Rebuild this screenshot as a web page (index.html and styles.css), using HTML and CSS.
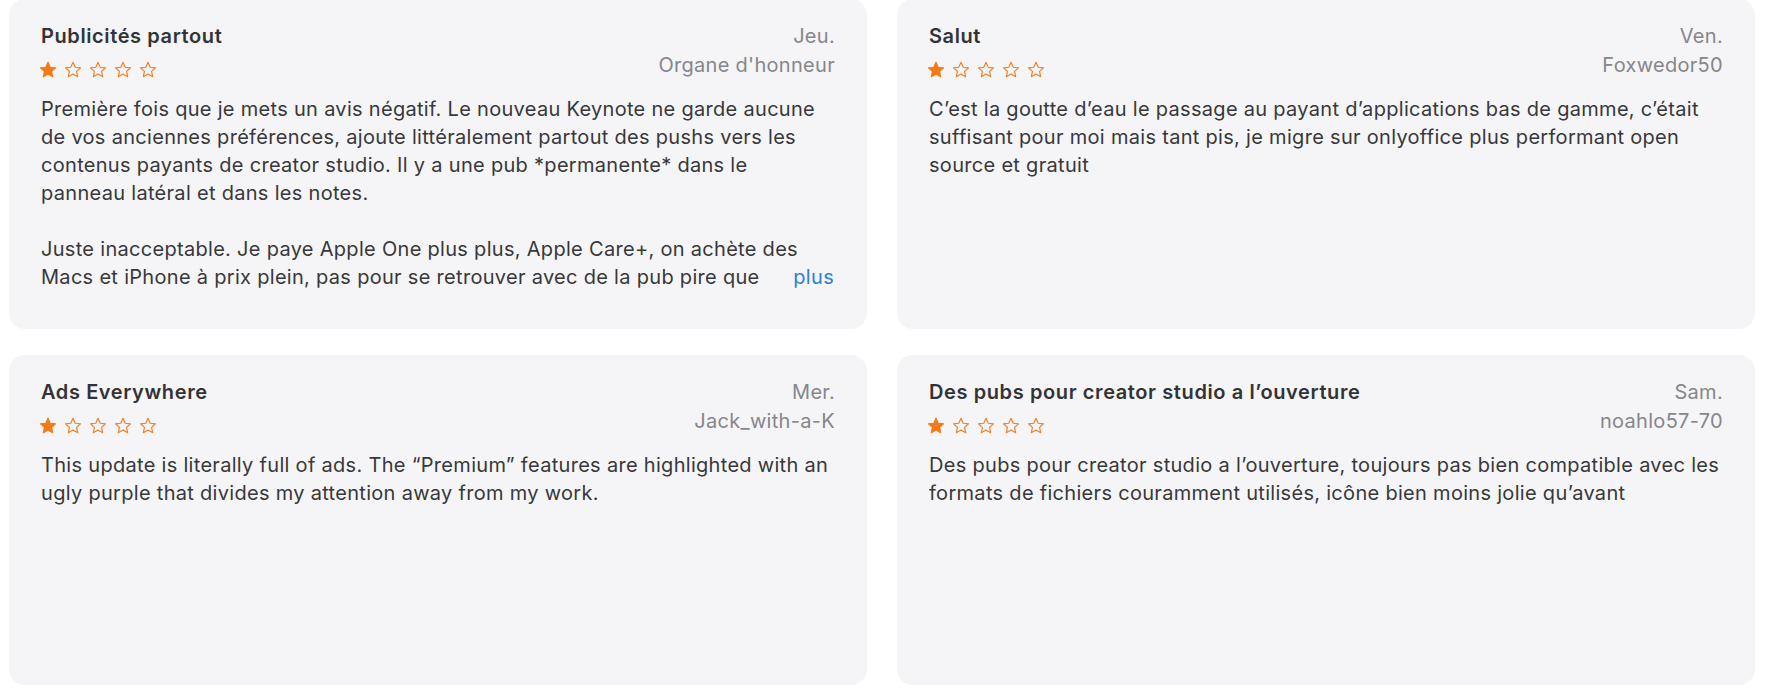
FILE: index.html
```html
<!DOCTYPE html>
<html lang="fr">
<head>
<meta charset="utf-8">
<title>Avis</title>
<link rel="stylesheet" href="styles.css">
</head>
<body>
<svg width="0" height="0" class="defs" aria-hidden="true">
  <defs>
    <path id="star" d="M8 1.2 L9.95 5.55 L14.7 6.05 L11.15 9.2 L12.15 13.9 L8 11.5 L3.85 13.9 L4.85 9.2 L1.3 6.05 L6.05 5.55 Z"/>
  </defs>
</svg>
<main class="grid">
  <article class="card">
    <header class="head">
      <h2 class="title">Publicités partout</h2>
      <span class="date">Jeu.</span>
      <div class="stars">
        <svg class="star full" viewBox="0 0 16 16"><use href="#star"/></svg>
        <svg class="star" viewBox="0 0 16 16"><use href="#star"/></svg>
        <svg class="star" viewBox="0 0 16 16"><use href="#star"/></svg>
        <svg class="star" viewBox="0 0 16 16"><use href="#star"/></svg>
        <svg class="star" viewBox="0 0 16 16"><use href="#star"/></svg>
      </div>
      <span class="author">Organe d'honneur</span>
    </header>
    <div class="body">
      <p>Première fois que je mets un avis négatif. Le nouveau Keynote ne garde aucune de vos anciennes préférences, ajoute littéralement partout des pushs vers les contenus payants de creator studio. Il y a une pub *permanente* dans le panneau latéral et dans les notes.</p>
      <p class="clamped">Juste inacceptable. Je paye Apple One plus plus, Apple Care+, on achète des</p>
      <div class="lastline">
        <span>Macs et iPhone à prix plein, pas pour se retrouver avec de la pub pire que</span>
        <a class="more" href="#">plus</a>
      </div>
    </div>
  </article>

  <article class="card">
    <header class="head">
      <h2 class="title">Salut</h2>
      <span class="date">Ven.</span>
      <div class="stars">
        <svg class="star full" viewBox="0 0 16 16"><use href="#star"/></svg>
        <svg class="star" viewBox="0 0 16 16"><use href="#star"/></svg>
        <svg class="star" viewBox="0 0 16 16"><use href="#star"/></svg>
        <svg class="star" viewBox="0 0 16 16"><use href="#star"/></svg>
        <svg class="star" viewBox="0 0 16 16"><use href="#star"/></svg>
      </div>
      <span class="author">Foxwedor50</span>
    </header>
    <div class="body">
      <p>C’est la goutte d’eau le passage au payant d’applications bas de gamme, c’était suffisant pour moi mais tant pis, je migre sur onlyoffice plus performant open source et gratuit</p>
    </div>
  </article>

  <article class="card">
    <header class="head">
      <h2 class="title">Ads Everywhere</h2>
      <span class="date">Mer.</span>
      <div class="stars">
        <svg class="star full" viewBox="0 0 16 16"><use href="#star"/></svg>
        <svg class="star" viewBox="0 0 16 16"><use href="#star"/></svg>
        <svg class="star" viewBox="0 0 16 16"><use href="#star"/></svg>
        <svg class="star" viewBox="0 0 16 16"><use href="#star"/></svg>
        <svg class="star" viewBox="0 0 16 16"><use href="#star"/></svg>
      </div>
      <span class="author">Jack_with-a-K</span>
    </header>
    <div class="body">
      <p>This update is literally full of ads. The “Premium” features are highlighted with an ugly purple that divides my attention away from my work.</p>
    </div>
  </article>

  <article class="card">
    <header class="head">
      <h2 class="title">Des pubs pour creator studio a l’ouverture</h2>
      <span class="date">Sam.</span>
      <div class="stars">
        <svg class="star full" viewBox="0 0 16 16"><use href="#star"/></svg>
        <svg class="star" viewBox="0 0 16 16"><use href="#star"/></svg>
        <svg class="star" viewBox="0 0 16 16"><use href="#star"/></svg>
        <svg class="star" viewBox="0 0 16 16"><use href="#star"/></svg>
        <svg class="star" viewBox="0 0 16 16"><use href="#star"/></svg>
      </div>
      <span class="author">noahlo57-70</span>
    </header>
    <div class="body">
      <p>Des pubs pour creator studio a l’ouverture, toujours pas bien compatible avec les formats de fichiers couramment utilisés, icône bien moins jolie qu’avant</p>
    </div>
  </article>
</main>
</body>
</html>
```

FILE: styles.css
```css
html, body {
  margin: 0;
  padding: 0;
  background: #ffffff;
}

body {
  font-family: Inter, "Noto Sans", "DejaVu Sans", sans-serif;
  -webkit-font-smoothing: antialiased;
}

.defs {
  position: absolute;
  width: 0;
  height: 0;
}

.grid {
  display: grid;
  grid-template-columns: 1fr 1fr;
  grid-auto-rows: 330px;
  column-gap: 30px;
  row-gap: 26px;
  padding: 0 10px 0 9px;
  margin-top: -1px;
}

.card {
  background: #f5f5f7;
  border-radius: 16px;
  padding: 23px 32px 0 32px;
  box-sizing: border-box;
  overflow: hidden;
}

.head {
  display: grid;
  grid-template-columns: 1fr auto;
  grid-auto-rows: 28px;
  row-gap: 1px;
  align-items: start;
}

.title {
  margin: 0;
  font-size: 20px;
  line-height: 28px;
  font-weight: 600;
  color: #333335;
  letter-spacing: 0.6px;
}

.date,
.author {
  font-size: 20px;
  line-height: 28px;
  color: #86868b;
  text-align: right;
  letter-spacing: 0.3px;
}

.stars {
  display: flex;
  align-items: flex-end;
  gap: 7px;
  height: 28px;
  margin-left: -2px;
}

.star {
  width: 18px;
  height: 18px;
  fill: none;
  stroke: #f0812a;
  stroke-width: 1.05;
  stroke-linejoin: round;
}

.star.full {
  fill: #f47a15;
  stroke: #f47a15;
}

.body {
  margin-top: 16px;
  font-size: 20px;
  line-height: 28px;
  letter-spacing: 0.3px;
  color: #38383a;
}

.body p {
  margin: 0 0 28px 0;
}

.body p:last-child,
.body p.clamped {
  margin-bottom: 0;
}

.lastline {
  display: flex;
  justify-content: space-between;
  align-items: baseline;
  white-space: nowrap;
}

.more {
  margin-right: 1px;
  color: #2c7fd6;
  text-decoration: none;
}
```
